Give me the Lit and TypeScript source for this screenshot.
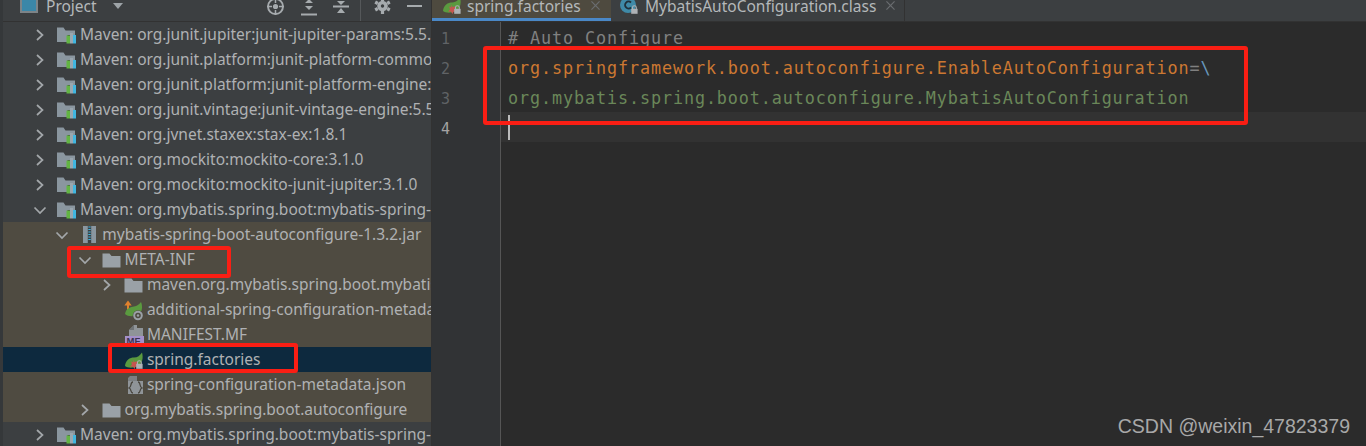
import { LitElement, html, css, svg } from "lit";
import { customElement } from "lit/decorators.js";

type Row = { d: number; c: "r" | "d" | ""; i: string; t: string; cls?: string };

const rows: Row[] = [
  { d: 0, c: "r", i: "maven", t: "Maven: org.junit.jupiter:junit-jupiter-params:5.5.2" },
  { d: 0, c: "r", i: "maven", t: "Maven: org.junit.platform:junit-platform-commons:1.5.2" },
  { d: 0, c: "r", i: "maven", t: "Maven: org.junit.platform:junit-platform-engine:1.5.2" },
  { d: 0, c: "r", i: "maven", t: "Maven: org.junit.vintage:junit-vintage-engine:5.5.2" },
  { d: 0, c: "r", i: "maven", t: "Maven: org.jvnet.staxex:stax-ex:1.8.1" },
  { d: 0, c: "r", i: "maven", t: "Maven: org.mockito:mockito-core:3.1.0" },
  { d: 0, c: "r", i: "maven", t: "Maven: org.mockito:mockito-junit-jupiter:3.1.0" },
  { d: 0, c: "d", i: "maven", t: "Maven: org.mybatis.spring.boot:mybatis-spring-boot-autoconfigure:1.3.2" },
  { d: 1, c: "d", i: "jar", t: "mybatis-spring-boot-autoconfigure-1.3.2.jar", cls: "lib" },
  { d: 2, c: "d", i: "folder", t: "META-INF", cls: "lib" },
  { d: 3, c: "r", i: "folder", t: "maven.org.mybatis.spring.boot.mybatis-spring-boot-autoconfigure", cls: "lib" },
  { d: 3, c: "", i: "spring-cfg", t: "additional-spring-configuration-metadata.json", cls: "lib" },
  { d: 3, c: "", i: "mf", t: "MANIFEST.MF", cls: "lib" },
  { d: 3, c: "", i: "spring", t: "spring.factories", cls: "sel" },
  { d: 3, c: "", i: "json", t: "spring-configuration-metadata.json", cls: "lib" },
  { d: 2, c: "r", i: "folder", t: "org.mybatis.spring.boot.autoconfigure", cls: "lib" },
  { d: 0, c: "r", i: "maven", t: "Maven: org.mybatis.spring.boot:mybatis-spring-boot-starter:1.3.2" },
];

const lock = svg`<path d="M12.500 12v-1.400a1.900 1.900 0 0 1 3.800 0V12" fill="none" stroke="#aeb2b6" stroke-width="1.100"/><rect x="11.200" y="11.800" width="6.400" height="5" fill="#aeb2b6"/>`;
const leaf = svg`<path d="M0 14C.5 8 5 5.500 9 5.500c3.500 0 6-2 8-5 1.500 5 .5 11-4 13.500-4 2-10 2.500-13 0z" fill="#5a9a3f"/>`;
const star = svg`<path d="M8 7.500l1.600 2.400 2.900-.6-1 3 2 2-3 .4-1 2.300-1.400-2.300-3-.1 1.900-2.200-.8-2.900 2.400 1z" fill="#c75450"/>`;

const icons: Record<string, unknown> = {
  maven: svg`<svg width="20" height="18" viewBox="-1 0 20 18"><path d="M0 1.500h6.500l2 3H18V9h-7.500v7H0z" fill="#8a969f"/><rect x="9.500" y="9.500" width="3.500" height="8" fill="#62b543"/><rect x="13" y="7" width="3" height="10.500" fill="#9aa7b0"/><rect x="16" y="9" width="3" height="8.500" fill="#40b6e0"/></svg>`,
  jar: svg`<svg width="20" height="18" viewBox="0 0 20 18"><rect x="5" y="0" width="13" height="17" fill="#8a969f"/><rect x="9.800" y="0" width="3.400" height="17" fill="#3c4044"/><path d="M10.300 1h2.400M10.300 3.500h2.400M10.300 6h2.400M10.300 8.500h2.400M10.300 11h2.400M10.300 13.500h2.400" stroke="#40b6e0" stroke-width="1.200"/></svg>`,
  folder: svg`<svg width="20" height="18" viewBox="-1 0 20 18"><path d="M.5 2.500h7l2 2.500h9v11.500H.5z" fill="#9aa1a7"/></svg>`,
  "spring-cfg": svg`<svg class="ov" width="20" height="25" viewBox="-2 0 20 25"><path d="M3 8v8" stroke="#e0812d" stroke-width="2"/><path d="M3 3.500l3.700 5H-.7z" fill="#e0812d"/><path d="M0 17c1-6 6-7 9-7.500 3-.5 5-2 7-4.500 2 5 1 10-2 12-4 3-11 3-14 0z" fill="#5a9a3f"/><circle cx="13" cy="18.500" r="5.300" fill="#4f4b41"/><circle cx="13" cy="18.500" r="3.800" fill="none" stroke="#9aa1a7" stroke-width="2"/><circle cx="13" cy="18.500" r="1.200" fill="#9aa1a7"/></svg>`,
  mf: svg`<svg class="ov" width="20" height="25" viewBox="-2 0 20 25"><path d="M9 3h3v3h6v8H4V8z" fill="#8f9498"/><path d="M9 3v5H4z" fill="#6e7275"/><rect x="0" y="14" width="19" height="8" fill="#a48fc9"/><text x="1.500" y="21.500" font-family="Liberation Sans, sans-serif" font-size="9.500" font-weight="700" fill="#3c3352">MF</text></svg>`,
  spring: svg`<svg class="ov" width="20" height="18" viewBox="-2 -1 20 18">${leaf}${star}${lock}</svg>`,
  json: svg`<svg class="ov" width="20" height="25" viewBox="-2 0 20 25"><path d="M5 4h7v5H3v-3z" fill="#7b7f82"/><rect x="3" y="9" width="15" height="13" fill="#8f9498"/><path d="M8 10c-3 0-1 5-4 6 3 1 1 5 4 5M13 10c3 0 1 5 4 6-3 1-1 5-4 5" fill="none" stroke="#4a4740" stroke-width="1.300"/></svg>`,
};

const tabSpring = svg`<svg width="20" height="18" viewBox="0 0 20 18">${leaf}${star}${lock}</svg>`;
const tabClass = svg`<svg width="20" height="18" viewBox="0 0 20 18"><circle cx="8" cy="8" r="8" fill="#3f8aa8"/><path d="M11 5.500a3.500 3.500 0 1 0 0 5" fill="none" stroke="#20303a" stroke-width="1.800"/>${lock}</svg>`;
const close = svg`<svg width="9" height="9" viewBox="0 0 10 10"><path d="M.5.500l9 9M9.500.500l-9 9" stroke="#6a6d70" stroke-width="1.300"/></svg>`;

@customElement("app-root")
export class AppRoot extends LitElement {
  static styles = css`
    :host { display: block; width: 1366px; height: 446px; overflow: hidden; position: relative; background: #2b2b2b; font-family: "Noto Sans", "Open Sans", sans-serif; }
    .page { display: flex; height: 446px; }
    .side { width: 432px; flex: none; background: #3c3f41; border-left: 3px solid #35383a; box-sizing: border-box; overflow: hidden; border-right: 1px solid #323232; }
    .head { height: 22px; box-sizing: border-box; border-bottom: 1px solid #323232; overflow: hidden; }
    .head-in { height: 12px; display: flex; align-items: center; color: #b4b8ba; font-size: 15.500px; }
    .pico { width: 18px; height: 17px; flex: none; margin: -4px 8px 0 17px; box-sizing: border-box; border: 2px solid #7d8488; background: #3b87a8; border-top: none; }
    .pname { width: 67px; flex: none; }
    .dd { width: 0; height: 0; border: 5.500px solid transparent; border-top: 6px solid #9da3a7; border-bottom: none; margin-right: 143px; flex: none; }
    .tool { flex: none; display: block; }
    .m1 { margin-right: 16px; }
    .m2 { margin: 2px 16px 0 0; }
    .m3 { margin: 2px 11px 0 0; }
    .m4 { margin: 10px 13px 0 0; }
    .ov { overflow: visible; }
    .tree { width: 428px; }
    .row { height: 25px; display: flex; align-items: center; white-space: nowrap; color: #afb1b3; font-size: 15.500px; line-height: 24px; overflow: hidden; }
    .lbl { margin-top: -2px; }
    .lib { background: #4f4b41; }
    .sel { background: #0d293e; }
    .chev { width: 14px; height: 14px; flex: none; margin: 0 9px 0 1px; }
    .ico { width: 20px; height: 18px; flex: none; margin-right: 4px; display: flex; align-items: center; }
    .tabs { height: 22px; background: #3c3f41; display: flex; box-sizing: border-box; border-bottom: 1px solid #323232; overflow: hidden; }
    .tab { display: flex; height: 21px; box-sizing: border-box; align-items: flex-start; color: #b4b8ba; font-size: 15.500px; border-right: 1px solid #323232; }
    .tab svg { display: block; flex: none; }
    .tab .ti { margin-top: -3px; height: 18px; }
    .tab .tt { line-height: 13px; white-space: nowrap; }
    .tab .tc { margin-top: 1px; }
    .t1 { width: 179px; background: #4e4a3f; border-bottom: 3px solid #4a88c7; padding-left: 11px; border-right: none; }
    .t1 .ti { margin-right: 4px; }
    .t1 .tc { margin-left: 10px; }
    .t2 { width: 294px; padding-left: 9px; }
    .t2 .ti { margin-right: 5px; }
    .t2 .tc { margin-left: 10px; }
    .main { flex: 1; display: flex; flex-direction: column; min-width: 0; }
    .ed { flex: 1; display: flex; }
    .gut { width: 69px; flex: none; background: #313335; border-right: 1px solid #555; box-sizing: border-box; padding-top: 2px; font-family: "DejaVu Sans Mono", monospace; font-size: 15px; color: #606366; }
    .gut div { height: 30px; line-height: 30px; padding-left: 9px; }
    .gut .cur { color: #a4a3a3; }
    .code { flex: 1; padding-top: 1px; font-family: "DejaVu Sans Mono", monospace; font-size: 16.800px; letter-spacing: 0.890px; }
    .ln { height: 30px; line-height: 30px; padding-left: 7px; white-space: pre; }
    .ln.cur { background: #323232; position: relative; margin-top: -1px; height: 30px; }
    .caret { position: absolute; left: 7px; top: 3px; width: 2px; height: 25px; background: #bbbbbb; }
    .cm { color: #808080; }
    .k { color: #cc7832; }
    .v { color: #6a8759; }
    .bs { color: #6897bb; }
    .box { position: absolute; border: 4px solid #fa1e14; border-radius: 3px; box-sizing: border-box; pointer-events: none; }
    .b1 { left: 483px; top: 46px; width: 765px; height: 79px; }
    .b2 { left: 67px; top: 246px; width: 164px; height: 32px; }
    .b3 { left: 108px; top: 343px; width: 190px; height: 30px; }
    .wm { position: absolute; right: 16px; top: 414px; font-family: "Liberation Sans", sans-serif; font-size: 19.500px; line-height: 24px; color: #a8a8a8; white-space: nowrap; }
  `;

  private chev(c: string) {
    if (!c) return html`<span class="chev"></span>`;
    const d = c === "r" ? "M4 2l5.500 5-5.500 5" : "M1.500 4.500l5.500 5.500 5.500-5.500";
    return html`<svg class="chev" viewBox="0 0 14 14"><path d=${d} fill="none" stroke="#a3a7aa" stroke-width="1.700"/></svg>`;
  }

  render() {
    return html`
      <div class="page">
        <div class="side">
          <div class="head"><div class="head-in">
            <span class="pico"></span><span class="pname">Project</span><span class="dd"></span>
            <svg class="tool m1" width="19" height="19" viewBox="0 0 19 19"><circle cx="9.500" cy="9.500" r="7.500" fill="none" stroke="#a6abae" stroke-width="1.900"/><circle cx="9.500" cy="9.500" r="2.600" fill="#a6abae"/><path d="M9.500 1v5M9.500 13v5M1 9.500h5M13 9.500h5" stroke="#a6abae" stroke-width="1.500"/></svg>
            <svg class="tool m2" width="16" height="19" viewBox="0 0 16 19"><path d="M8 1l4 4H4zM8 12L4 8h8z" fill="#a6abae"/><path d="M0 16.500h16" stroke="#a6abae" stroke-width="2"/></svg>
            <svg class="tool m3" width="16" height="19" viewBox="0 0 16 19"><path d="M8 7L4 3h8zM8 10l4 5H4z" fill="#a6abae"/><path d="M0 8.500h16" stroke="#a6abae" stroke-width="2"/></svg>
            <svg class="tool m4" width="1" height="22" viewBox="0 0 1 22"><path d="M.5 0v22" stroke="#55585a"/></svg>
            <svg class="tool m1" width="17" height="18" viewBox="0 0 17 18"><path d="M8.500 5.500a3.500 3.500 0 1 0 .01 0z" fill="none" stroke="#a6abae" stroke-width="3.600"/><path d="M8.500 1v3M8.500 14v3M1.200 5l2.600 1.500M13.200 11.500l2.600 1.500M1.200 13l2.600-1.500M13.200 6.500L15.800 5" stroke="#a6abae" stroke-width="3.200"/></svg>
            <svg class="tool" width="15" height="4" viewBox="0 0 15 4"><path d="M0 2h15" stroke="#a6abae" stroke-width="2"/></svg>
          </div></div>
          <div class="tree">
            ${rows.map(
              (r) => html`<div class="row ${r.cls ?? ""}" style="padding-left:${29 + r.d * 22.3}px">
                ${this.chev(r.c)}<span class="ico">${icons[r.i]}</span><span class="lbl">${r.t}</span>
              </div>`
            )}
          </div>
        </div>
        <div class="main">
          <div class="tabs">
            <div class="tab t1"><span class="ti">${tabSpring}</span><span class="tt">spring.factories</span><span class="tc">${close}</span></div>
            <div class="tab t2"><span class="ti">${tabClass}</span><span class="tt">MybatisAutoConfiguration.class</span><span class="tc">${close}</span></div>
          </div>
          <div class="ed">
            <div class="gut"><div>1</div><div>2</div><div>3</div><div class="cur">4</div></div>
            <div class="code">
              <div class="ln cm"># Auto Configure</div>
              <div class="ln"><span class="k">org.springframework.boot.autoconfigure.EnableAutoConfiguration</span><span class="cm">=</span><span class="bs">\\</span></div>
              <div class="ln v">org.mybatis.spring.boot.autoconfigure.MybatisAutoConfiguration</div>
              <div class="ln cur"><span class="caret"></span></div>
            </div>
          </div>
        </div>
      </div>
      <div class="box b1"></div>
      <div class="box b2"></div>
      <div class="box b3"></div>
      <div class="wm">CSDN @weixin_47823379</div>
    `;
  }
}
